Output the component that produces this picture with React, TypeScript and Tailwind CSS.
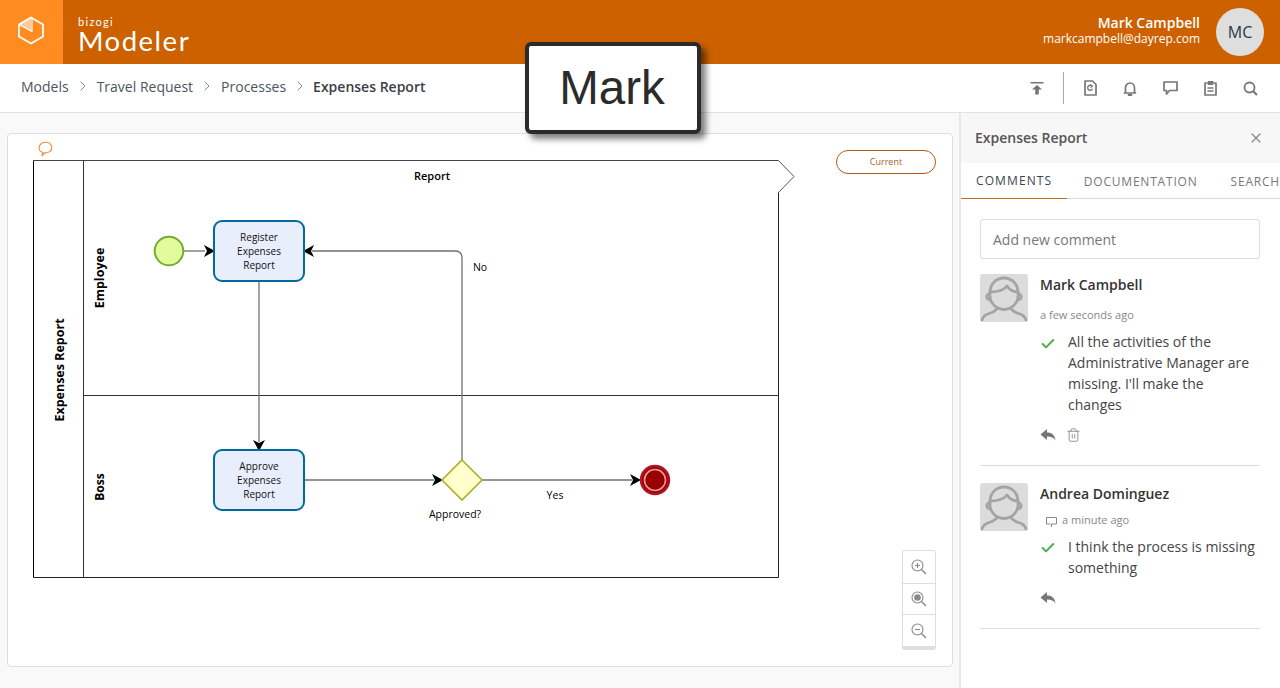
import React from "react";
import { ChevronRight, X, Check, Trash2 } from "lucide-react";

const Sep = () => <ChevronRight className="mx-[6px] w-[16px] h-[16px] text-[#6f6f6f]" strokeWidth={1.25} />;

const Avatar = () => (
  <div className="w-12 h-12 rounded-[3px] bg-[#dcdcdc] shrink-0 overflow-hidden">
    <svg viewBox="0 0 48 48" className="w-12 h-12" fill="none" stroke="#a4a4a4" strokeWidth="2.800" strokeLinecap="round" strokeLinejoin="round">
      <path d="M10 19C10 10 16 4 24 4s14 6 14 15" />
      <path d="M10 19c-1 7 3 13 8 15 4 2 8 2 12 0 5-2 9-8 8-15" />
      <path d="M9 20c-3 1-3 5 1 6M39 20c3 1 3 5-1 6" />
      <path d="M10 18c6 0 13-1 17-6 2 3 6 6 11 6" />
      <path d="M17 35c-2 2-5 4-9 5-3 1-5 3-6 6M31 35c2 2 5 4 9 5 3 1 5 3 6 6" />
    </svg>
  </div>
);

const GreenCheck = () => <Check className="w-[16px] h-[16px] text-[#4cae4f]" strokeWidth={3} />;

const ReplyIcon = () => (
  <svg viewBox="0 0 16 14" className="w-4 h-[14px]" fill="#777">
    <path d="M0.500 6.500 7 1v3.400c5 0 8 2.600 8.500 8.200-1.800-3-4.200-4-8.500-4V12z" />
  </svg>
);

function Diagram() {
  const font = "'Open Sans', 'Noto Sans', sans-serif";
  const Arrow = ({ d }: { d: string }) => <path d={d} fill="#000" />;
  return (
    <svg width="946" height="534" viewBox="7 133 946 534" className="absolute -left-px -top-px" style={{ fontFamily: font }}>
      <path d="M42 156l.8-3.500c-3-1-4.300-3.500-3.500-6 1-3 4-4.500 7.200-4.200 3.500.4 5.800 3 5.300 6-.5 3-3.800 5-7.300 4.500z" fill="none" stroke="#ef8a2b" strokeWidth="1.100" />
      <path d="M33.500 160.500H778.500" stroke="#444" fill="none" />
      <path d="M778.500 160.500L794 176.500 778.500 192.500" stroke="#555" fill="none" />
      <path d="M778.500 192.500V577.500H33.500" stroke="#222" fill="none" />
      <path d="M33.500 160.500V577.500" stroke="#000" fill="none" />
      <path d="M83.500 160.500V577.500" stroke="#333" fill="none" />
      <path d="M83.500 395.500H778.500" stroke="#333" fill="none" />

      <text x="432" y="180" textAnchor="middle" fontSize="11" fontWeight="600" fill="#000">Report</text>
      <text transform="translate(64,370) rotate(-90)" textAnchor="middle" fontSize="12.500" fontWeight="700" fill="#000">Expenses Report</text>
      <text transform="translate(104,278) rotate(-90)" textAnchor="middle" fontSize="12.500" fontWeight="700" fill="#000">Employee</text>
      <text transform="translate(104,487) rotate(-90)" textAnchor="middle" fontSize="12" fontWeight="700" fill="#000">Boss</text>

      <g stroke="#707070" strokeWidth="1.300" fill="none">
        <path d="M184 251H205" />
        <path d="M259 282V442" />
        <path d="M462 460V258Q462 251 455 251H312" />
        <path d="M304 480H434" />
        <path d="M482 480H632" />
      </g>
      <Arrow d="M204 245L215 251 204 257 207 251Z" />
      <Arrow d="M314 245L303 251 314 257 311 251Z" />
      <Arrow d="M253 440L259 451 265 440 259 443Z" />
      <Arrow d="M432 474L443 480 432 486 435 480Z" />
      <Arrow d="M630 474L641 480 630 486 633 480Z" />

      <circle cx="169" cy="251" r="14.300" fill="#e2fb9c" stroke="#74ac2e" strokeWidth="2" />

      <rect x="214" y="221" width="90" height="60" rx="8" fill="#e9eefc" stroke="#006a9f" strokeWidth="2" />
      <g textAnchor="middle" fontSize="10" fill="#111">
        <text x="259" y="241">Register</text>
        <text x="259" y="255">Expenses</text>
        <text x="259" y="269">Report</text>
      </g>
      <rect x="214" y="450" width="90" height="60" rx="8" fill="#e9eefc" stroke="#006a9f" strokeWidth="2" />
      <g textAnchor="middle" fontSize="10" fill="#111">
        <text x="259" y="470">Approve</text>
        <text x="259" y="484">Expenses</text>
        <text x="259" y="498">Report</text>
      </g>

      <path d="M462 460L482 480 462 500 442 480Z" fill="#ffffcc" stroke="#acac2e" strokeWidth="1.600" />
      <circle cx="655" cy="480" r="14" fill="#990000" stroke="#b31225" strokeWidth="2.500" />
      <circle cx="655" cy="480" r="10.500" fill="#990000" stroke="#e79a9e" strokeWidth="1.600" />

      <g fontSize="10.500" fill="#000">
        <text x="480" y="271" textAnchor="middle">No</text>
        <text x="555" y="499" textAnchor="middle">Yes</text>
        <text x="455" y="518" textAnchor="middle">Approved?</text>
      </g>
    </svg>
  );
}

const ZoomIcon = ({ kind }: { kind: "plus" | "dot" | "minus" }) => (
  <svg viewBox="0 0 16 16" className="w-4 h-4" fill="none" stroke="#8a8a8a" strokeWidth="1.100">
    <circle cx="6.500" cy="6.500" r="5.500" />
    <path d="M10.500 10.500L15 15" strokeWidth="1.500" />
    {kind === "plus" && <path d="M4 6.500h5M6.500 4v5" />}
    {kind === "minus" && <path d="M4 6.500h5" />}
    {kind === "dot" && <circle cx="6.500" cy="6.500" r="3.300" fill="#8a8a8a" stroke="none" />}
  </svg>
);

export default function App() {
  return (
    <div className="relative w-[1280px] h-[688px] overflow-hidden bg-white font-['Open_Sans',sans-serif]">
      <header className="h-16 bg-[#cd6100] flex items-center">
        <div className="w-[63px] h-16 bg-[#ff8b21] flex items-center justify-center">
          <svg viewBox="0 0 26 29" className="w-[26px] h-[29px] mb-[3px] mr-[2px]" fill="none" stroke="#fff" strokeWidth="1.800" strokeLinejoin="round">
            <path d="M2 8.500 13 15V2z" fill="#fff" fillOpacity="0.55" stroke="none" />
            <path d="M13 1.500 25 8.500v12L13 27.500 1 20.500v-12z" />
            <path d="M1 8.500l13 7V1.500" strokeWidth="1.200" />
          </svg>
        </div>
        <div className="ml-[15px] flex flex-col text-white mt-[6px]">
          <span className="text-[11px] leading-[12px] tracking-[1.300px] font-['Lato',sans-serif]">bizogi</span>
          <span className="text-[27.500px] leading-[26px] tracking-[1.500px] font-['Lato',sans-serif]">Modeler</span>
        </div>
        <div className="ml-auto text-right text-white mb-[3px]">
          <div className="text-[14px] leading-[18px] font-semibold">Mark Campbell</div>
          <div className="text-[12px] leading-[16px] mt-[-1px]">markcampbell@dayrep.com</div>
        </div>
        <div className="ml-4 mr-4 w-12 h-12 rounded-full bg-[#dedede] flex items-center justify-center text-[16px] text-[#2b3846]">MC</div>
      </header>

      <div className="h-[49px] border-b border-[#e2e2e2] flex items-center pl-[21px] text-[14px] text-[#4a5560]">
        <span className="mb-1">Models</span><span className="mb-1"><Sep /></span>
        <span className="mb-1">Travel Request</span><span className="mb-1"><Sep /></span>
        <span className="mb-1">Processes</span><span className="mb-1"><Sep /></span>
        <span className="mb-1 font-semibold text-[#3a3f45] -ml-px">Expenses Report</span>
        <div className="ml-auto flex items-center text-[#777] pr-[22px]">
          <svg viewBox="0 0 14 14" className="w-[14px] h-[14px] mr-[19px]" fill="#777">
            <path d="M.500 1h13v1.500H.500zM7 4l5 4.500H8.800V13.500H5.200V8.500H2z" />
          </svg>
          <div className="w-px h-8 bg-[#aaa] mr-[20px]" />
          <svg viewBox="0 0 13 16" className="w-[13px] h-4 mr-[26px]" fill="none" stroke="#777" strokeWidth="1.700" strokeLinejoin="round">
            <path d="M1 1h7.500L12 4.500V15H1z" />
            <path d="M8.200 6.300a2.500 2.500 0 1 0 .3 2.500" strokeWidth="1.400" />
            <path d="M6.200 4.800l2.300 1.500-2 1.300" strokeWidth="1.100" />
          </svg>
          <svg viewBox="0 0 14 15" className="w-[14px] h-[15px] mr-[26px]" fill="none" stroke="#777" strokeWidth="1.700" strokeLinejoin="round">
            <path d="M2.500 11.500V6.500a4.500 4.500 0 0 1 9 0v5l1 .5h-11z" />
            <path d="M5.500 13.500a1.500 1.200 0 0 0 3 0z" fill="#777" />
          </svg>
          <svg viewBox="0 0 15 14" className="w-[15px] h-[14px] mr-[26px]" fill="none" stroke="#777" strokeWidth="1.700" strokeLinejoin="round">
            <path d="M1 1h13v8.500H6.500L3.500 13V9.500H1z" />
          </svg>
          <svg viewBox="0 0 13 16" className="w-[13px] h-4 mr-[26px]" fill="none" stroke="#777" strokeWidth="1.700" strokeLinejoin="round">
            <path d="M3.500 3H1v12h11V3H9.500" />
            <path d="M4 1.500h5V4.500H4z" fill="#777" strokeWidth="1" />
            <path d="M3.500 8h6M3.500 11h6" strokeWidth="1.400" />
          </svg>
          <svg viewBox="0 0 15 15" className="w-[15px] h-[15px]" fill="none" stroke="#777" strokeWidth="1.800">
            <circle cx="6.500" cy="6.500" r="5" />
            <path d="M10.200 10.200L14 14" strokeWidth="2.200" />
          </svg>
        </div>
      </div>

      <div className="flex h-[575px]">
        <main className="w-[959px] bg-[#f9f9f9] pl-[7px] pr-[6px] pt-5 pb-[21px]">
          <div className="relative w-[946px] h-[534px] bg-white border border-[#dedede] rounded-[4px]">
            <Diagram />
            <div className="absolute left-[828px] top-[16px] w-[100px] h-6 rounded-full border border-[#b25a10] bg-white flex items-center justify-center text-[9px] text-[#a3622a]">Current</div>
            <div className="absolute left-[894px] top-[416px] w-[34px] h-[100px] bg-white border border-[#dedede] border-b-[4px] rounded-[3px] flex flex-col pt-px">
              <div className="h-[32px] border-b border-[#dedede] flex items-center justify-center"><ZoomIcon kind="plus" /></div>
              <div className="h-[32px] border-b border-[#dedede] flex items-center justify-center"><ZoomIcon kind="dot" /></div>
              <div className="h-[31px] flex items-center justify-center"><ZoomIcon kind="minus" /></div>
            </div>
          </div>
        </main>

        <aside className="w-[321px] border-l-2 border-[#e8e8e8] flex flex-col bg-white overflow-hidden">
          <div className="h-[50px] bg-[#f7f7f7] flex items-center justify-between pl-[14px] pr-[16px] shrink-0">
            <span className="text-[14px] font-semibold text-[#555] mb-[2px]">Expenses Report</span>
            <X className="w-[16px] h-[16px] text-[#888] mb-px" strokeWidth={1.800} />
          </div>
          <div className="h-[36px] flex border-b border-[#dcdcdc] text-[12px] shrink-0 whitespace-nowrap">
            <div className="w-[106px] pl-[15px] pt-[9px] border-b border-[#c66a1b] h-[36px] text-[#3d4650] tracking-[1.100px] mr-[17px]">COMMENTS</div>
            <div className="pt-[10px] text-[#777] tracking-[0.800px]">DOCUMENTATION</div>
            <div className="pl-[33px] pt-[10px] text-[#777] tracking-[0.800px]">SEARCH</div>
          </div>
          <div className="pl-[19px] w-[299px] pt-5">
            <div className="h-10 w-[280px] border border-[#dcdcdc] rounded-[3px] flex items-center pl-3 text-[14px] text-[#777]">Add new comment</div>

            <div className="flex mt-[15px] gap-3">
              <Avatar />
              <div className="flex-1">
                <div className="text-[14px] font-semibold leading-[20px] text-[#333] mt-[1px]">Mark Campbell</div>
                <div className="text-[11px] leading-[16px] text-[#888] mt-[12px]">a few seconds ago</div>
              </div>
            </div>
            <div className="pl-[60px] mt-[2px]">
              <div className="flex">
                <div className="w-7 pt-[11px] shrink-0"><GreenCheck /></div>
                <p className="text-[14px] leading-[21px] text-[#444] mt-[6px] w-[190px]">All the activities of the Administrative Manager are missing. I'll make the changes</p>
              </div>
              <div className="flex items-center gap-[10px] mt-[12px] h-[16px]">
                <ReplyIcon />
                <Trash2 className="w-[15px] h-[16px] text-[#888]" strokeWidth={1.400} />
              </div>
            </div>
            <div className="border-b border-[#dcdcdc] mt-[22px]" />

            <div className="flex mt-[17px] gap-3">
              <Avatar />
              <div className="flex-1">
                <div className="text-[14px] font-semibold leading-[20px] text-[#333] mt-px">Andrea Dominguez</div>
                <div className="flex items-center text-[11px] leading-[16px] text-[#888] mt-[8px] pl-[6px]">
                  <svg viewBox="0 0 12 12" className="w-[12px] h-[12px] mr-[4px] mt-[4px]" fill="none" stroke="#888" strokeWidth="1"><path d="M.500 1.500h10v6.500h-5l0 3" /><path d="M.500 1.500V8h4" /></svg>
                  a minute ago
                </div>
              </div>
            </div>
            <div className="pl-[60px] -mt-px">
              <div className="flex">
                <div className="w-7 pt-[10px] shrink-0"><GreenCheck /></div>
                <p className="text-[14px] leading-[21px] text-[#444] mt-[6px] whitespace-nowrap">I think the process is missing<br />something</p>
              </div>
              <div className="flex items-center mt-[12px] h-[16px]">
                <ReplyIcon />
              </div>
            </div>
            <div className="border-b border-[#dcdcdc] mt-[22px]" />
          </div>
        </aside>
      </div>

      <div className="absolute left-[525px] top-[42px] w-[176px] h-[92px] bg-white border-[4px] border-[#2b2b2b] rounded-[6px] shadow-[5px_5px_6px_rgba(0,0,0,0.5)] flex items-center justify-center pr-[2px] text-[47.500px] text-[#2b2b2b] font-['Liberation_Sans',sans-serif]">Mark</div>
    </div>
  );
}
